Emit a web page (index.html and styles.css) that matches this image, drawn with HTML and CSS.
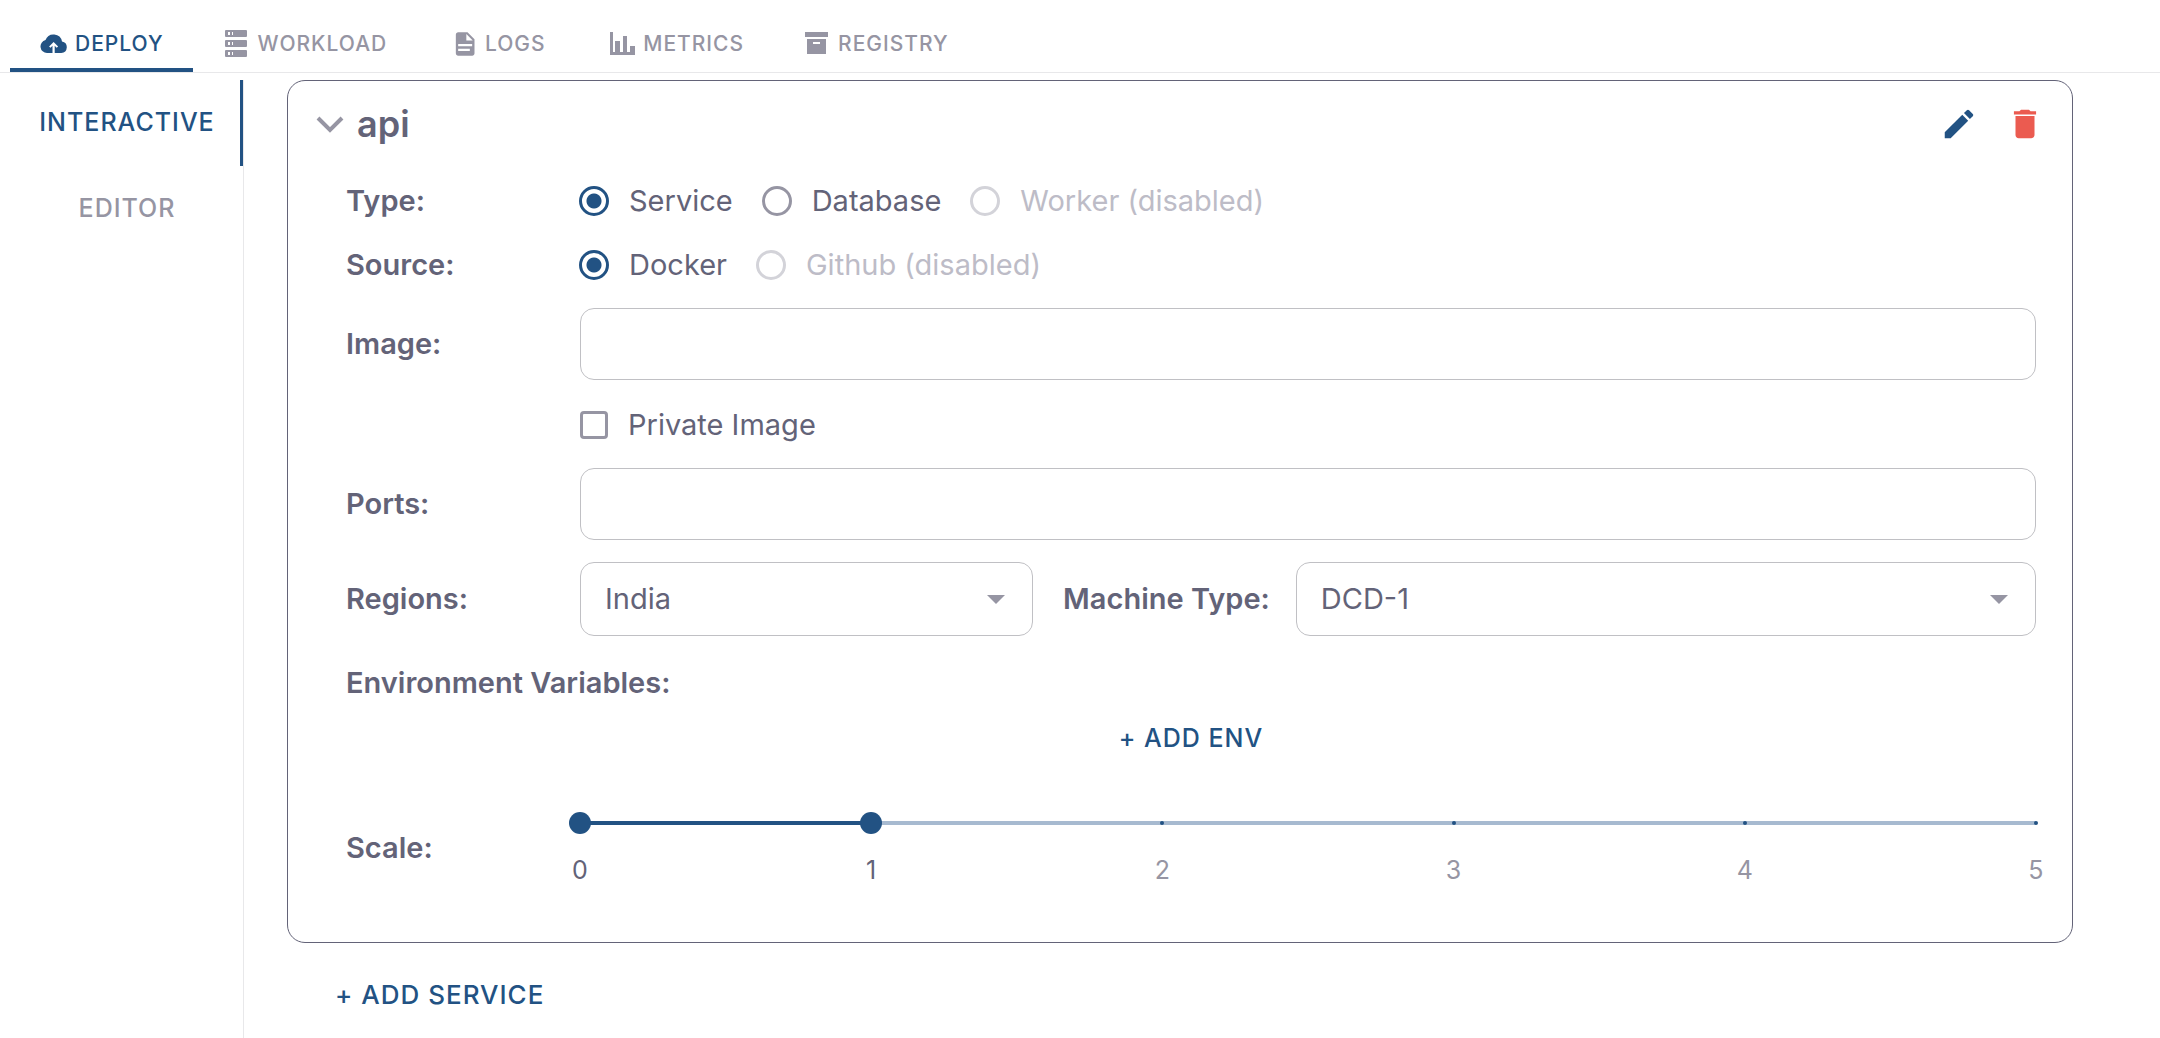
FILE: index.html
```html
<!DOCTYPE html>
<html lang="en">
<head>
<meta charset="utf-8">
<title>Deploy</title>
<link rel="stylesheet" href="styles.css">
</head>
<body>
<div class="app">
  <nav class="tabs" aria-label="Sections">
    <a class="tab tab-active" href="#deploy">
      <svg class="tab-icon" viewBox="0 0 28 28" aria-hidden="true"><path fill="currentColor" fill-rule="evenodd" d="M7 23a6.600 6.600 0 0 1-1.500-13A8.600 8.600 0 0 1 22 11.500 5.800 5.800 0 0 1 21.300 23h-6.600v-7.200l2 2 1.400-1.400L13.600 11.900l-4.500 4.500 1.400 1.400 2-2V23z"/></svg>
      <span>DEPLOY</span>
    </a>
    <a class="tab" href="#workload">
      <svg class="tab-icon" viewBox="0 0 28 28" aria-hidden="true"><path fill="currentColor" fill-rule="evenodd" d="M3 0h20a1 1 0 0 1 1 1v5a1 1 0 0 1-1 1H3a1 1 0 0 1-1-1V1a1 1 0 0 1 1-1zm2 2v3h2V2zm4 0v3h1V2zM3 10h20a1 1 0 0 1 1 1v5a1 1 0 0 1-1 1H3a1 1 0 0 1-1-1v-5a1 1 0 0 1 1-1zm2 2v3h2v-3zm4 0v3h1v-3zM3 20h20a1 1 0 0 1 1 1v5a1 1 0 0 1-1 1H3a1 1 0 0 1-1-1v-5a1 1 0 0 1 1-1zm2 2v3h2v-3zm4 0v3h1v-3z"/></svg>
      <span>WORKLOAD</span>
    </a>
    <a class="tab" href="#logs">
      <svg class="tab-icon" viewBox="-1 0 24 24" aria-hidden="true"><path fill="currentColor" d="M14 2H6c-1.100 0-2 .9-2 2v16c0 1.100.9 2 2 2h12c1.100 0 2-.9 2-2V8zm2 16H6v-2h10zm2-4H6v-2h12zm-5-5V3.500L18.500 9z"/></svg>
      <span>LOGS</span>
    </a>
    <a class="tab" href="#metrics">
      <svg class="tab-icon" viewBox="0 0 28 28" aria-hidden="true"><path fill="currentColor" d="M2 2h3v20h2V11h5v11h3V6h4v16h3v-6h5v9H2z"/></svg>
      <span>METRICS</span>
    </a>
    <a class="tab" href="#registry">
      <svg class="tab-icon" viewBox="0 0 28 28" aria-hidden="true"><path fill="currentColor" fill-rule="evenodd" d="M2 2h23v5H2zM4 9h19v15H4zm6 3v2h7v-2z"/></svg>
      <span>REGISTRY</span>
    </a>
  </nav>

  <div class="body">
    <nav class="side" aria-label="Deploy mode">
      <a class="side-tab side-tab-active" href="#interactive">INTERACTIVE</a>
      <a class="side-tab" href="#editor">EDITOR</a>
    </nav>

    <main class="main">
      <form class="card">
        <header class="card-head">
          <button class="icon-btn" type="button" aria-label="Collapse">
            <svg class="chevron" viewBox="0 0 28 28" aria-hidden="true"><path fill="none" stroke="currentColor" stroke-width="4" d="M2 8 14 20 26 8"/></svg>
          </button>
          <h2 class="card-title">api</h2>
          <div class="actions">
            <button class="icon-btn edit" type="button" aria-label="Edit">
              <svg class="action-icon" viewBox="0 0 24 24" aria-hidden="true"><path fill="currentColor" d="M3 17.250V21h3.750L17.810 9.940l-3.750-3.750zM20.710 7.040a.996.996 0 0 0 0-1.410l-2.340-2.340a.996.996 0 0 0-1.410 0l-1.830 1.830 3.750 3.750z"/></svg>
            </button>
            <button class="icon-btn delete" type="button" aria-label="Delete">
              <svg class="action-icon" viewBox="0 0 24 24" aria-hidden="true"><path fill="currentColor" d="M6 19c0 1.100.9 2 2 2h8c1.100 0 2-.9 2-2V7H6zM19 4h-3.500l-1-1h-5l-1 1H5v2h14z"/></svg>
            </button>
          </div>
        </header>

        <div class="rows">
          <div class="row" role="radiogroup" aria-labelledby="type-label">
            <span class="label" id="type-label">Type:</span>
            <div class="options">
              <label class="option"><input class="radio" type="radio" name="type" checked>Service</label>
              <label class="option"><input class="radio" type="radio" name="type">Database</label>
              <label class="option option-off"><input class="radio" type="radio" name="type" disabled>Worker (disabled)</label>
            </div>
          </div>
          <div class="row" role="radiogroup" aria-labelledby="source-label">
            <span class="label" id="source-label">Source:</span>
            <div class="options">
              <label class="option"><input class="radio" type="radio" name="source" checked>Docker</label>
              <label class="option option-off"><input class="radio" type="radio" name="source" disabled>Github (disabled)</label>
            </div>
          </div>
          <div class="row">
            <label class="label" for="image">Image:</label>
            <input class="field" id="image" type="text">
          </div>
          <div class="row row-check">
            <label class="option"><input class="check" type="checkbox">Private Image</label>
          </div>
          <div class="row">
            <label class="label" for="ports">Ports:</label>
            <input class="field" id="ports" type="text">
          </div>
          <div class="row row-split">
            <label class="label" for="region">Regions:</label>
            <div class="select">
              <select class="field" id="region"><option>India</option></select>
              <svg class="arrow" viewBox="0 0 20 10" aria-hidden="true"><path fill="currentColor" d="M0 0h20L10 10z"/></svg>
            </div>
            <label class="label" for="machine">Machine Type:</label>
            <div class="select">
              <select class="field" id="machine"><option>DCD-1</option></select>
              <svg class="arrow" viewBox="0 0 20 10" aria-hidden="true"><path fill="currentColor" d="M0 0h20L10 10z"/></svg>
            </div>
          </div>
        </div>

        <section class="env">
          <h3 class="label">Environment Variables:</h3>
          <button class="text-btn" type="button">+ ADD ENV</button>
        </section>

        <div class="row row-scale">
          <span class="label" id="scale-label">Scale:</span>
          <div class="scale" role="group" aria-labelledby="scale-label">
            <div class="slider">
              <div class="rail"><div class="fill" style="width:20%"></div></div>
              <div class="marks"><i class="mark"></i><i class="mark"></i><i class="mark"></i><i class="mark"></i><i class="mark"></i><i class="mark"></i></div>
              <input class="range" type="range" min="0" max="5" value="0" aria-label="Minimum scale">
              <input class="range" type="range" min="0" max="5" value="1" aria-label="Maximum scale">
            </div>
            <div class="ticks">
              <span class="tick tick-on">0</span><span class="tick tick-on">1</span><span class="tick">2</span><span class="tick">3</span><span class="tick">4</span><span class="tick">5</span>
            </div>
          </div>
        </div>
      </form>
      <button class="text-btn add-service" type="button">+ ADD SERVICE</button>
    </main>
  </div>
</div>
</body>
</html>
```
FILE: styles.css
```css
:root {
  --primary: #225283;
  --text: #636378;
  --muted: #9695a3;
  --faint: #bdbcc7;
  --line: #e8e8ea;
  --field-line: #c0c0c4;
  --danger: #eb5b50;
}

* { box-sizing: border-box; }

body {
  margin: 0;
  background: #fff;
  color: var(--text);
  font-family: Inter, "Liberation Sans", sans-serif;
  font-size: 29px;
  line-height: 42px;
}

h2, h3 { margin: 0; }
a { color: inherit; text-decoration: none; }
button, input, select { font: inherit; color: inherit; margin: 0; }
button { padding: 0; border: 0; background: none; cursor: pointer; }
svg { display: block; }

.app {
  display: flex;
  flex-direction: column;
  min-height: 100vh;
}

/* Top tabs */
.tabs {
  display: flex;
  height: 73px;
  padding-left: 10px;
  border-bottom: 1px solid var(--line);
}
.tab {
  display: flex;
  align-items: center;
  justify-content: center;
  gap: 7px;
  min-width: 162px;
  padding: 20px 29px 0 30px;
  border-bottom: 4px solid transparent;
  color: var(--muted);
  font-size: 21px;
  font-weight: 500;
  letter-spacing: 1px;
}
.tab-active {
  border-color: var(--primary);
  color: var(--primary);
}
.tab-icon { width: 28px; height: 28px; }

/* Side tabs */
.body {
  display: flex;
  flex: 1;
  padding-top: 7px;
}
.side {
  flex: none;
  width: 234px;
  margin-left: 10px;
  border-right: 1px solid var(--line);
}
.side-tab {
  display: flex;
  align-items: center;
  justify-content: center;
  height: 86px;
  padding: 0 0 2px 4px;
  border-right: 3px solid transparent;
  color: var(--muted);
  font-size: 25px;
  font-weight: 500;
  letter-spacing: 1px;
}
.side-tab-active {
  border-color: var(--primary);
  color: var(--primary);
}

/* Service card */
.main {
  flex: 1;
  min-width: 0;
  padding: 0 87px 0 43px;
}
.card {
  padding: 19px 36px 58px 58px;
  border: 1px solid var(--text);
  border-radius: 18px;
}
.card-head {
  display: flex;
  align-items: center;
  gap: 13px;
  height: 48px;
  margin-left: -30px;
}
.icon-btn { color: var(--muted); }
.chevron { width: 28px; height: 28px; }
.card-title {
  font-size: 36px;
  font-weight: 600;
}
.actions {
  display: flex;
  gap: 28px;
  margin-left: auto;
  margin-right: -8px;
}
.action-icon { width: 38px; height: 38px; }
.edit { color: var(--primary); }
.delete { color: var(--danger); }

/* Form rows */
.rows {
  display: grid;
  gap: 22px;
  padding-top: 32px;
}
.row {
  display: grid;
  grid-template-columns: 234px 1fr;
  align-items: center;
}
.row-check {
  grid-template-columns: 1fr;
  padding: 2px 0 0 234px;
}
.row-split { grid-template-columns: 234px 453fr auto 740fr; }
.row-split .label + .select + .label { padding: 0 26px 0 30px; }
.label {
  font-size: 29px;
  font-weight: 600;
}
.options {
  display: flex;
  gap: 29px;
  margin-left: -1px;
}
.option {
  display: flex;
  align-items: center;
  gap: 20px;
}
.option-off { color: var(--faint); }
.radio {
  appearance: none;
  width: 30px;
  height: 30px;
  border: 3px solid var(--muted);
  border-radius: 50%;
}
.radio:checked {
  border-color: var(--primary);
  background: radial-gradient(circle, var(--primary) 7px, transparent 8px);
}
.radio:disabled { border-color: #d3d3d9; }
.check {
  appearance: none;
  width: 28px;
  height: 28px;
  border: 3px solid var(--muted);
  border-radius: 4px;
}
.field {
  width: 100%;
  height: 72px;
  padding: 0 24px;
  border: 1px solid var(--field-line);
  border-radius: 14px;
  background: #fff;
}
.select {
  position: relative;
}
.select .field {
  display: block;
  height: 74px;
  appearance: none;
}
.arrow {
  position: absolute;
  top: 33px;
  right: 28px;
  width: 18px;
  height: 9px;
  color: var(--muted);
  pointer-events: none;
}

/* Environment variables */
.env {
  display: flex;
  flex-direction: column;
  gap: 13px;
  padding-top: 26px;
}
.text-btn {
  color: var(--primary);
  font-size: 25px;
  font-weight: 500;
  letter-spacing: 1px;
}

/* Scale slider */
.row-scale { padding-top: 53px; }
.slider {
  position: relative;
  height: 22px;
}
.rail {
  position: absolute;
  inset: 9px 0;
  background: #a7bad0;
}
.fill {
  height: 100%;
  background: var(--primary);
}
.marks {
  position: absolute;
  inset: 9px -2px;
  display: flex;
  justify-content: space-between;
}
.mark {
  width: 4px;
  height: 4px;
  border-radius: 50%;
  background: var(--primary);
}
.range {
  position: absolute;
  inset: 0 -11px;
  width: calc(100% + 22px);
  height: 22px;
  appearance: none;
  background: none;
  pointer-events: none;
}
.range::-webkit-slider-thumb {
  appearance: none;
  width: 22px;
  height: 22px;
  border-radius: 50%;
  background: var(--primary);
  pointer-events: auto;
}
.ticks {
  display: flex;
  justify-content: space-between;
  margin: 22px -11px 0;
}
.tick {
  width: 22px;
  color: var(--muted);
  font-size: 25px;
  line-height: 28px;
  text-align: center;
}
.tick-on { color: var(--text); }
.add-service {
  margin: 31px 0 0 48px;
  font-size: 26px;
}
```
